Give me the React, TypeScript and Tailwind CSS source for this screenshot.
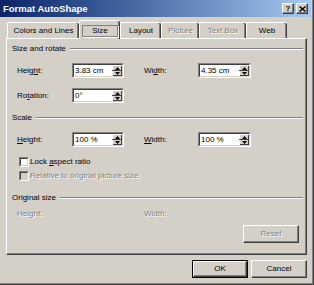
import React from "react";

const FONT = "font-['Liberation_Sans',Arial,sans-serif]";

function U({ children }: { children: React.ReactNode }) {
  return <span className="underline underline-offset-[1px]">{children}</span>;
}

function SpinInput({ value }: { value: string }) {
  return (
    <div className="h-[15px] w-full border border-t-[#808080] border-l-[#808080] border-b-white border-r-white">
      <div className="h-full w-full border border-t-[#404040] border-l-[#404040] border-b-[#d4d0c8] border-r-[#d4d0c8] bg-white flex">
        <div className="flex-1 pl-[1px] text-[8px] leading-[11px] text-black whitespace-nowrap overflow-hidden">{value}</div>
        <div className="w-[10px] h-full flex flex-col">
          <div className="h-[5px] bg-[#d4d0c8] border-t border-l border-t-white border-l-white shadow-[inset_-1px_0_0_#404040] flex items-center justify-center">
            <svg width="5" height="3" viewBox="0 0 5 3"><path d="M2.5 0 L5 3 L0 3 Z" fill="#000" /></svg>
          </div>
          <div className="h-[1px] bg-[#404040]" />
          <div className="h-[5px] bg-[#d4d0c8] border-l border-l-white shadow-[inset_-1px_-1px_0_#404040] flex items-center justify-center">
            <svg width="5" height="3" viewBox="0 0 5 3"><path d="M0 0 L5 0 L2.5 3 Z" fill="#000" /></svg>
          </div>
        </div>
      </div>
    </div>
  );
}

function GroupHeader({ label, className = "" }: { label: string; className?: string }) {
  return (
    <div className={"flex items-center h-[12px] " + className}>
      <span className="text-[8px] leading-[12px] text-black whitespace-nowrap">{label}</span>
      <div className="flex-1 ml-[4px] h-[2px] border-t border-t-[#808080] border-b border-b-white" />
    </div>
  );
}

function Checkbox({ disabled, label, className = "" }: { disabled?: boolean; label: React.ReactNode; className?: string }) {
  return (
    <div className={"flex items-center h-[11px] pl-[7px] " + className}>
      <div className="w-[10px] h-[10px] border border-t-[#808080] border-l-[#808080] border-b-white border-r-white">
        <div className={"w-full h-full border border-t-[#404040] border-l-[#404040] border-b-[#d4d0c8] border-r-[#d4d0c8] " + (disabled ? "bg-[#d4d0c8]" : "bg-white")} />
      </div>
      <span className={"ml-[1px] text-[8px] leading-[11px] whitespace-nowrap " + (disabled ? "text-[#808080] [text-shadow:1px_1px_0_#fff]" : "text-black")}>{label}</span>
    </div>
  );
}

function Btn({ children, def, disabled, className = "" }: { children: React.ReactNode; def?: boolean; disabled?: boolean; className?: string }) {
  const inner = (
    <div className="w-full h-full border border-t-white border-l-white border-b-[#404040] border-r-[#404040] shadow-[inset_-1px_-1px_0_#808080] flex items-center justify-center">
      <span className={"text-[8px] leading-[10px] " + (disabled ? "text-[#808080] [text-shadow:1px_1px_0_#fff]" : "text-black")}>{children}</span>
    </div>
  );
  return (
    <div className={"h-[18px] w-[56px] bg-[#d4d0c8] " + (def ? "border border-black " : "") + className}>{inner}</div>
  );
}

const tabs = [
  { label: "Colors and Lines", w: "w-[72px]" },
  { label: "Size", w: "w-[41px]", sel: true },
  { label: "Layout", w: "w-[41px]" },
  { label: "Picture", w: "w-[38px]", dis: true },
  { label: "Text Box", w: "w-[47px]", dis: true },
  { label: "Web", w: "w-[41px]" },
];

export default function App() {
  return (
    <div className={"w-[314px] h-[285px] bg-[#d4d0c8] border-r border-b border-r-[#404040] border-b-[#404040] shadow-[inset_-1px_-1px_0_#808080] flex flex-col " + FONT}>
      {/* Title bar */}
      <div className="w-[311px] h-[17px] bg-gradient-to-r from-[#0a246a] to-[#a6caf0] flex items-center pl-[3px] pr-[3px]">
        <span className="text-white font-bold text-[9.5px] leading-[17px] flex-1 whitespace-nowrap">Format AutoShape</span>
        <div className="flex gap-[2px]">
          <div className="w-[12px] h-[11px] bg-[#d4d0c8] border border-t-white border-l-white border-b-[#404040] border-r-[#404040] shadow-[inset_-1px_-1px_0_#808080] flex items-center justify-center">
            <span className="text-black font-bold text-[8px] leading-[8px]">?</span>
          </div>
          <div className="w-[12px] h-[11px] bg-[#d4d0c8] border border-t-white border-l-white border-b-[#404040] border-r-[#404040] shadow-[inset_-1px_-1px_0_#808080] flex items-center justify-center">
            <svg width="7" height="6" viewBox="0 0 7 6">
              <path d="M0.5 0.5 L6.5 5.5 M6.5 0.5 L0.5 5.5" stroke="#000" strokeWidth="1.4" />
            </svg>
          </div>
        </div>
      </div>

      {/* Tabs */}
      <div className="mt-[3px] ml-[7px] h-[18px] flex items-end relative z-10">
        {tabs.map((t) => (
          <div
            key={t.label}
            className={
              t.w +
              " bg-[#d4d0c8] border-l border-t border-l-white border-t-white rounded-tl-[2px] rounded-tr-[2px] shadow-[inset_-1px_0_0_#404040,inset_-2px_0_0_#808080] flex items-center justify-center " +
              (t.sel ? "h-[19px] -mb-[1px] pt-[1px]" : "h-[16px] pt-[1px]")
            }
          >
            {t.sel ? (
              <span className="border border-[#808080] shadow-[1px_1px_0_#fff] px-[9px] text-[8px] leading-[10px] text-black">{t.label}</span>
            ) : (
              <span className={"text-[8px] leading-[10px] whitespace-nowrap " + (t.dis ? "text-[#808080] [text-shadow:1px_1px_0_#fff]" : "text-black")}>{t.label}</span>
            )}
          </div>
        ))}
      </div>

      {/* Panel */}
      <div className="ml-[6px] w-[301px] h-[217px] border-l border-t border-l-white border-t-white border-r border-b border-r-[#404040] border-b-[#404040] shadow-[inset_-1px_-1px_0_#808080] pl-[5px] pr-[3px] flex flex-col text-black">
        <GroupHeader label="Size and rotate" className="mt-[4px]" />
        <div className="mt-[8px] flex items-center h-[15px] pl-[5px] text-[8px]">
          <span className="w-[55px]">Heig<U>h</U>t:</span>
          <div className="w-[52px]"><SpinInput value="3.83 cm" /></div>
          <div className="w-[20px]" />
          <span className="w-[54px]">Wi<U>d</U>th:</span>
          <div className="w-[53px]"><SpinInput value="4.35 cm" /></div>
        </div>
        <div className="mt-[10px] flex items-center h-[15px] pl-[5px] text-[8px]">
          <span className="w-[55px]">Ro<U>t</U>ation:</span>
          <div className="w-[52px]"><SpinInput value="0°" /></div>
        </div>
        <GroupHeader label="Scale" className="mt-[9px]" />
        <div className="mt-[8px] flex items-center h-[15px] pl-[5px] text-[8px]">
          <span className="w-[55px]"><U>H</U>eight:</span>
          <div className="w-[52px]"><SpinInput value="100 %" /></div>
          <div className="w-[20px]" />
          <span className="w-[54px]"><U>W</U>idth:</span>
          <div className="w-[53px]"><SpinInput value="100 %" /></div>
        </div>
        <Checkbox className="mt-[9px]" label={<>Lock <U>a</U>spect ratio</>} />
        <Checkbox className="mt-[3px]" disabled label="Relative to original picture size" />
        <GroupHeader label="Original size" className="mt-[11px]" />
        <div className="mt-[4px] flex items-center h-[12px] pl-[5px] text-[8px] text-[#808080] [text-shadow:1px_1px_0_#fff]">
          <span className="w-[127px]">Height:</span>
          <span>Width:</span>
        </div>
        <div className="mt-[5px] flex justify-end pr-[4px]">
          <Btn disabled>Reset</Btn>
        </div>
      </div>

      {/* Buttons */}
      <div className="mt-[5px] flex justify-end pr-[6px] gap-[3px]">
        <Btn def>OK</Btn>
        <Btn>Cancel</Btn>
      </div>
    </div>
  );
}
